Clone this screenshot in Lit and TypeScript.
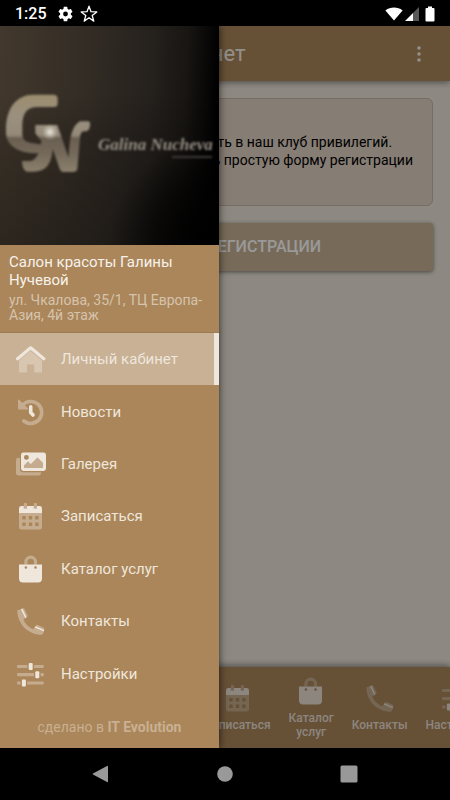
import { LitElement, html, svg, css, type SVGTemplateResult } from "lit";
import { customElement, property, state } from "lit/decorators.js";
import { classMap } from "lit/directives/class-map.js";

type IconName = "home" | "news" | "gallery" | "calendar" | "bag" | "phone" | "sliders";

interface Section {
  id: string;
  label: string;
  icon: IconName;
}

const SECTIONS: Section[] = [
  { id: "account", label: "Личный кабинет", icon: "home" },
  { id: "news", label: "Новости", icon: "news" },
  { id: "gallery", label: "Галерея", icon: "gallery" },
  { id: "booking", label: "Записаться", icon: "calendar" },
  { id: "catalog", label: "Каталог услуг", icon: "bag" },
  { id: "contacts", label: "Контакты", icon: "phone" },
  { id: "settings", label: "Настройки", icon: "sliders" },
];

// Two-tone icons: "soft" is the faded layer, "strong" the bright one.
const ICONS: Record<IconName, SVGTemplateResult> = {
  home: svg`
    <path class="soft" d="M14.5 6.8 26 16.6V28.5H18.2V20.5H11V28.5H3V16.6Z"/>
    <path class="strong-line" stroke-width="3.2" d="M1.6 14.8 14.7 3.8 27.8 14.8"/>`,
  news: svg`
    <g class="soft">
      <path class="line" stroke-width="3.6" d="M6.6 8A11 11 0 1 1 7.8 24"/>
      <path d="M2 3.200Q2.200 2.200 3.200 2.800L12 11.400Q12 12.400 11 12.400H3Q2 12.400 2 11.400Z"/>
    </g>
    <path class="strong-line" stroke-width="3.6" d="M14.7 9.8V15.6L17 18"/>`,
  gallery: svg`
    <path class="soft" d="M4 8.8V20Q4 23.2 7 23.2H25V24.2Q25 26.6 22.6 26.6H2.4Q0 26.6 0 24.2V11.2Q0 8.8 2.4 8.8Z"/>
    <path class="strong" fill-rule="evenodd" d="M7.2 3.6H27.6Q30 3.6 30 6V19.6Q30 22 27.6 22H7.2Q5 22 5 19.6V6Q5 3.6 7.2 3.6ZM10.4 6A2.4 2.4 0 1 0 10.4 10.8 2.4 2.4 0 1 0 10.4 6ZM8 19H27V14L21.5 8.6 14.8 15.2 12 12.6 8 16.4Z"/>
    <path class="soft" d="M8 19H27V14L21.5 8.6 14.8 15.2 12 12.6 8 16.4Z"/>`,
  calendar: svg`
    <path class="strong" d="M3 12V7.4Q3 5 5.4 5H7.8V7.6H11V5H17.8V7.6H21V5H23.6Q26 5 26 7.4V12Z"/>
    <path class="soft" fill-rule="evenodd" d="M3 12H26V26Q26 28.5 23.6 28.5H5.4Q3 28.5 3 26ZM6.3 15V18.4H9.7V15ZM12.8 15V18.4H16.2V15ZM19.2 15V18.4H22.6V15ZM6.3 21.6V25H9.7V21.6ZM12.8 21.6V25H16.2V21.6ZM19.2 21.6V25H22.6V21.6Z"/>
    <path class="soft" d="M7.8 2.8Q7.8 2 8.6 2H10.2Q11 2 11 2.8V7.6H7.8ZM17.8 2.8Q17.8 2 18.6 2H20.2Q21 2 21 2.8V7.6H17.8Z"/>`,
  bag: svg`
    <path class="soft" d="M8.3 10.4V8A6.4 6.4 0 0 1 21.1 8V10.4H17.9V8A3.2 3.2 0 0 0 11.5 8V10.4Z"/>
    <path class="strong" fill-rule="evenodd" d="M3 10.4H26V24.4Q26 28.4 22 28.4H7Q3 28.4 3 24.4ZM9.9 12.2A1.3 1.3 0 1 0 9.9 14.8 1.3 1.3 0 1 0 9.9 12.2ZM19.5 12.2A1.3 1.3 0 1 0 19.5 14.8 1.3 1.3 0 1 0 19.5 12.2Z"/>`,
  phone: svg`
    <path class="soft" d="M1.3 4.2 4.8 3.2 9.2 12.2 7.4 13.8C9.2 18 12.6 21.4 17 23.2L18.6 21.6 27.8 25.6 26.8 28Q26.5 28.8 25.6 28.8C12 28.6 1.4 18 1.3 4.2Z"/>
    <path class="soft" d="M7.2 2.3Q8 2 8.4 2.8L11.6 9.6Q11.9 10.6 11.2 11L10.2 11.8 6 2.7ZM20 19.4 19.2 20.4 28 24.4 28.4 22.8Q28.6 22 27.8 21.7L21.2 18.8Q20.4 18.6 20 19.4Z"/>
    <path class="strong" d="M4.8 3.2 6.4 2.5 10.4 11.3 9.2 12.2ZM18.6 21.6 19.6 20.3 28.2 24.1 27.8 25.6Z"/>`,
  sliders: svg`
    <path class="soft" d="M2 5.9H11.4V9.1H2Q1 9.1 1 8.1V6.9Q1 5.9 2 5.9ZM18 5.9H26.8Q27.8 5.9 27.8 6.9V8.1Q27.8 9.1 26.8 9.1H18ZM2 14.1H18V17.3H2Q1 17.3 1 16.3V15.1Q1 14.1 2 14.1ZM24.6 14.1H26.8Q27.8 14.1 27.8 15.1V16.3Q27.8 17.3 26.8 17.3H24.6ZM2 22.4H4.6V25.6H2Q1 25.6 1 24.6V23.4Q1 22.4 2 22.4ZM11.2 22.4H26.8Q27.8 22.4 27.8 23.4V24.6Q27.8 25.6 26.8 25.6H11.2Z"/>
    <rect class="strong" x="12.7" y="4" width="4" height="7" rx="1"/>
    <rect class="strong" x="19.3" y="12.2" width="4" height="7" rx="1"/>
    <rect class="strong" x="5.9" y="20.5" width="4" height="7" rx="1"/>`,
};

@customElement("duo-icon")
export class DuoIcon extends LitElement {
  @property() name: IconName = "home";

  static styles = css`
    :host { display: block; width: 30px; height: 30px; flex: none; }
    svg { display: block; width: 100%; height: 100%; }
    .soft { fill: currentColor; opacity: 0.4; }
    .strong { fill: currentColor; }
    .line, .strong-line {
      fill: none; stroke: currentColor; stroke-linecap: round; stroke-linejoin: round;
    }
  `;

  render() {
    return html`<svg viewBox="0 0 30 30" aria-hidden="true">${ICONS[this.name]}</svg>`;
  }
}

@customElement("status-bar")
export class StatusBar extends LitElement {
  static styles = css`
    :host {
      display: flex; align-items: center; height: 26px; flex: none; box-sizing: border-box;
      padding: 2px 15px 0 15px; background: #000; color: #fff;
      font-weight: 500; font-size: 16px; line-height: 24px;
    }
    .time { margin-right: 11px; }
    .gear { margin-right: 7px; }
    .spring { flex: 1; }
    .signal { margin: 0 6px 0 2px; }
    svg { display: block; fill: currentColor; }
  `;

  render() {
    return html`
      <span class="time">1:25</span>
      <svg class="gear" width="15" height="16" viewBox="2 2 20 20" aria-hidden="true">
        <path d="M19.14 12.94c.04-.3.06-.61.06-.94s-.02-.64-.07-.94l2.03-1.58a.49.49 0 0 0 .12-.61l-1.92-3.32a.49.49 0 0 0-.59-.22l-2.39.96a7 7 0 0 0-1.62-.94l-.36-2.54a.48.48 0 0 0-.48-.41h-3.84a.48.48 0 0 0-.47.41l-.36 2.54c-.59.24-1.13.57-1.62.94l-2.39-.96a.48.48 0 0 0-.59.22L2.74 8.87a.48.48 0 0 0 .12.61l2.03 1.58c-.05.3-.09.63-.09.94s.02.64.07.94l-2.03 1.58a.49.49 0 0 0-.12.61l1.92 3.32c.12.22.37.29.59.22l2.39-.96c.5.38 1.03.7 1.62.94l.36 2.54c.05.24.24.41.48.41h3.84c.24 0 .44-.17.47-.41l.36-2.54c.59-.24 1.13-.56 1.62-.94l2.39.96c.22.08.47 0 .59-.22l1.92-3.32a.48.48 0 0 0-.12-.61zM12 15.2A3.2 3.2 0 1 1 12 8.8a3.2 3.2 0 0 1 0 6.4z"/>
      </svg>
      <svg width="18" height="18" viewBox="0 0 18 18" aria-hidden="true">
        <path fill="none" stroke="#fff" stroke-width="1.3" stroke-linejoin="round" d="M9 1.2 11 6.7 16.8 6.9 12.2 10.5 13.8 16.1 9 12.8 4.2 16.1 5.8 10.5 1.2 6.9 7 6.7Z"/>
      </svg>
      <span class="spring"></span>
      <svg width="18" height="14" viewBox="0 0 18 14" aria-hidden="true">
        <path d="M.4 3.4C5.4-.3 12.600-.3 17.600 3.400L9 13.600Z"/>
      </svg>
      <svg class="signal" width="14" height="14" viewBox="0 0 14 14" aria-hidden="true">
        <path opacity=".35" d="M14 0V14H8V6Z"/><path d="M8 6V14H0Z"/>
      </svg>
      <svg width="10" height="16" viewBox="0 0 10 16" aria-hidden="true">
        <path d="M3 .5H7V2H8.600Q9.500 2 9.500 3V14.500Q9.500 15.500 8.600 15.500H1.400Q.5 15.500.5 14.500V3Q.5 2 1.400 2H3Z"/>
      </svg>`;
  }
}

@customElement("system-nav")
export class SystemNav extends LitElement {
  static styles = css`
    :host {
      display: flex; align-items: center; justify-content: center; gap: 94px;
      height: 52px; flex: none; background: #000;
    }
    button {
      display: grid; place-items: center; width: 30px; height: 30px;
      padding: 0; border: 0; background: none; color: #999;
    }
    svg { display: block; fill: currentColor; }
  `;

  render() {
    return html`
      <button aria-label="Назад"><svg width="18" height="18"><path d="M15 1Q16 .4 16 1.500V16.500Q16 17.600 15 17L1 9.600Q.3 9 1 8.400Z"/></svg></button>
      <button aria-label="Домой"><svg width="16" height="16"><circle cx="8" cy="8" r="7.8"/></svg></button>
      <button aria-label="Недавние"><svg width="18" height="18"><rect x=".5" y=".5" width="17" height="17" rx="1.500"/></svg></button>`;
  }
}

@customElement("salon-photo")
export class SalonPhoto extends LitElement {
  static styles = css`
    :host { display: block; flex: none; background: #000; }
    svg { display: block; width: 100%; }
    .script {
      font: italic 700 17px "Liberation Serif", serif; fill: #958e83;
    }
  `;

  render() {
    return html`
      <svg viewBox="0 0 219 219" role="img" aria-label="Galina Nucheva">
        <defs>
          <linearGradient id="wall" gradientUnits="userSpaceOnUse" x1="0" y1="0" x2="219" y2="10">
            <stop offset="0" stop-color="#42382d"/>
            <stop offset="0.35" stop-color="#352e26"/>
            <stop offset="0.7" stop-color="#25211d"/>
            <stop offset="0.86" stop-color="#181512"/>
            <stop offset="0.97" stop-color="#060505"/>
            <stop offset="1" stop-color="#010101"/>
          </linearGradient>
          <linearGradient id="floor" x1="0" y1="0" x2="0" y2="1">
            <stop offset="0.3" stop-color="#000" stop-opacity="0"/>
            <stop offset="0.5" stop-color="#000" stop-opacity="0.15"/>
            <stop offset="1" stop-color="#000" stop-opacity="0.3"/>
          </linearGradient>
          <radialGradient id="corner" gradientUnits="userSpaceOnUse" cx="219" cy="219" r="110">
            <stop offset="0.15" stop-color="#000"/>
            <stop offset="0.6" stop-color="#000" stop-opacity="0.6"/>
            <stop offset="1" stop-color="#000" stop-opacity="0"/>
          </radialGradient>
          <linearGradient id="metal" gradientUnits="userSpaceOnUse" x1="0" y1="205" x2="0" y2="440">
            <stop offset="0" stop-color="#9c8d6d"/>
            <stop offset="0.3" stop-color="#9a9080"/>
            <stop offset="0.52" stop-color="#958a79"/>
            <stop offset="0.56" stop-color="#6a5f51"/>
            <stop offset="0.75" stop-color="#74695a"/>
            <stop offset="1" stop-color="#8c806d"/>
          </linearGradient>
          <radialGradient id="glint">
            <stop offset="0" stop-color="#f1ede4"/>
            <stop offset="1" stop-color="#cfc7b8" stop-opacity="0"/>
          </radialGradient>
          <filter id="soft" x="-10%" y="-10%" width="120%" height="120%">
            <feGaussianBlur stdDeviation="0.8"/>
          </filter>
        </defs>
        <rect width="219" height="219" fill="url(#wall)"/>
        <rect width="219" height="219" fill="url(#floor)"/>
        <rect width="219" height="219" fill="url(#corner)"/>
        <g filter="url(#soft)">
          <g transform="scale(0.3333)" fill="url(#metal)">
            <path d="M162 206Q173 207 173 218V234Q172 243 162 243H112C80 243 67 262 67 300V326Q68 346 90 350L130 356 124 382H100C48 378 18 355 18 318C16 245 50 206 100 206Z"/>
            <path d="M106 297H165L160 330C160 400 150 436 100 437H82Q66 434 66 405H92C108 402 120 380 124 345L106 322Z"/>
            <path d="M140 297H172L206 395C208 340 214 300 240 286H265Q272 288 270 300Q268 314 258 316H250Q241 318 240 335L232 430Q230 438 222 438H188Q180 436 176 420L150 345Z"/>
          </g>
          <circle cx="50" cy="106" r="8" fill="url(#glint)"/>
          <path d="M172 131H212" stroke="#3d3832" stroke-width="2"/>
        </g>
        <text class="script" x="98" y="124" filter="url(#soft)">Galina Nucheva</text>
      </svg>`;
  }
}

@customElement("app-root")
export class AppRoot extends LitElement {
  @state() private active = "account";

  static styles = css`
    :host {
      display: flex; flex-direction: column; min-height: 100vh;
      font-family: Roboto, "Noto Sans", sans-serif; background: #000;
    }
    button { font: inherit; color: inherit; border: 0; margin: 0; cursor: pointer; }
    .app {
      position: relative; flex: 1; display: flex; flex-direction: column; overflow: hidden;
      background: #ece4d9;
    }
    .page { flex: 1; display: flex; flex-direction: column; min-width: 0; }

    .topbar {
      display: flex; align-items: center; height: 55px; flex: none;
      padding: 0 16px; gap: 28px; background: #aa865a; color: #f5efe8;
      box-shadow: 0 2px 6px rgba(0, 0, 0, 0.4);
    }
    .topbar h1 { margin: 0; flex: 1; font-size: 22px; font-weight: 400; line-height: 28px; }
    .tool { display: grid; place-items: center; width: 30px; height: 30px; padding: 0; background: none; }
    .tool svg { display: block; fill: currentColor; }

    .content { flex: 1; display: flex; flex-direction: column; gap: 17px; padding: 17px 17px; }
    .card {
      display: grid; place-items: center; min-height: 106px; box-sizing: content-box;
      background: #dfd0c2; border: 1px solid #c4b5a6; border-radius: 6px;
      text-align: center; font-size: 14px; line-height: 18px; color: #000;
    }
    .card p { margin: 0 0 2px; }
    .card span { display: block; white-space: nowrap; }
    .cta {
      height: 48px; padding: 0; border-radius: 3px; background: #c6b193; color: #fff;
      font-size: 16px; font-weight: 500; line-height: 20px; text-align: center;
      box-shadow: 0 1px 4px rgba(0, 0, 0, 0.5);
    }

    .tabs {
      display: flex; height: 81px; flex: none; overflow: hidden; box-sizing: border-box;
      padding-left: 3px; background: #aa865a; color: #e9dfd4;
    }
    .tabwrap { box-shadow: 0 -2px 6px rgba(0, 0, 0, 0.4); }
    .tab {
      display: flex; flex-direction: column; align-items: center; justify-content: center;
      gap: 5px; flex: none; width: min-content; padding: 0 9px; background: none;
      font-size: 12px; font-weight: 500; line-height: 14px;
    }

    .scrim { position: absolute; inset: 0; background: rgba(0, 0, 0, 0.4); }

    .drawer {
      position: absolute; inset: 0 auto 0 0; width: 219px;
      display: flex; flex-direction: column;
      background: #aa865a; color: #efe6dc;
      box-shadow: 0 0 8px rgba(0, 0, 0, 0.7);
    }
    .info {
      height: 88px; flex: none; box-sizing: border-box; padding: 8px 8px 0 9px;
      border-bottom: 1px solid #9d7a50;
    }
    .info h2 { margin: 0 0 4px; font-size: 15px; font-weight: 400; line-height: 18px; color: #f7f2ec; }
    .info address { font-style: normal; font-size: 14px; line-height: 15px; color: #d6c3ad; }
    .menu { flex: 1; display: grid; grid-auto-rows: 1fr; }
    .item {
      display: flex; align-items: center; gap: 15px; padding: 0 16px;
      background: none; text-align: left; font-size: 15px; line-height: 20px;
    }
    .item.active { background: #c8b194; border-right: 5px solid #efe6dc; }
    .credit {
      height: 48px; flex: none; margin: 0; text-align: center;
      font-size: 14px; line-height: 54px; color: #c9b092;
    }
    .credit a { color: inherit; text-decoration: none; font-weight: 700; }
  `;

  private open(id: string) {
    this.active = id;
  }

  render() {
    return html`
      <status-bar></status-bar>
      <div class="app">
        <div class="page">
          <header class="topbar">
            <button class="tool" aria-label="Меню">
              <svg width="20" height="14"><path d="M0 0H20V2H0ZM0 6H20V8H0ZM0 12H20V14H0Z"/></svg>
            </button>
            <h1>Личный кабинет</h1>
            <button class="tool" aria-label="Ещё">
              <svg width="4" height="18"><circle cx="2" cy="3" r="1.800"/><circle cx="2" cy="9" r="1.800"/><circle cx="2" cy="15" r="1.800"/></svg>
            </button>
          </header>
          <main class="content">
            <section class="card">
              <p>
                <span>Приглашаем Вас вступить в наш клуб привилегий.</span>
                <span>Вам необходимо заполнить простую форму регистрации</span>
              </p>
            </section>
            <button class="cta">К АНКЕТЕ РЕГИСТРАЦИИ</button>
          </main>
          <div class="tabwrap">
            <nav class="tabs">
              ${SECTIONS.map((s) => html`
                <button class="tab" @click=${() => this.open(s.id)}>
                  <duo-icon name=${s.icon}></duo-icon>
                  <span>${s.label}</span>
                </button>`)}
            </nav>
          </div>
        </div>
        <div class="scrim"></div>
        <aside class="drawer">
          <salon-photo></salon-photo>
          <div class="info">
            <h2>Салон красоты Галины Нучевой</h2>
            <address>ул. Чкалова, 35/1, ТЦ Европа-Азия, 4й этаж</address>
          </div>
          <nav class="menu">
            ${SECTIONS.map((s) => html`
              <button class=${classMap({ item: true, active: s.id === this.active })} @click=${() => this.open(s.id)}>
                <duo-icon name=${s.icon}></duo-icon>
                <span>${s.label}</span>
              </button>`)}
          </nav>
          <p class="credit">сделано в <a href="#">IT Evolution</a></p>
        </aside>
      </div>
      <system-nav></system-nav>`;
  }
}
